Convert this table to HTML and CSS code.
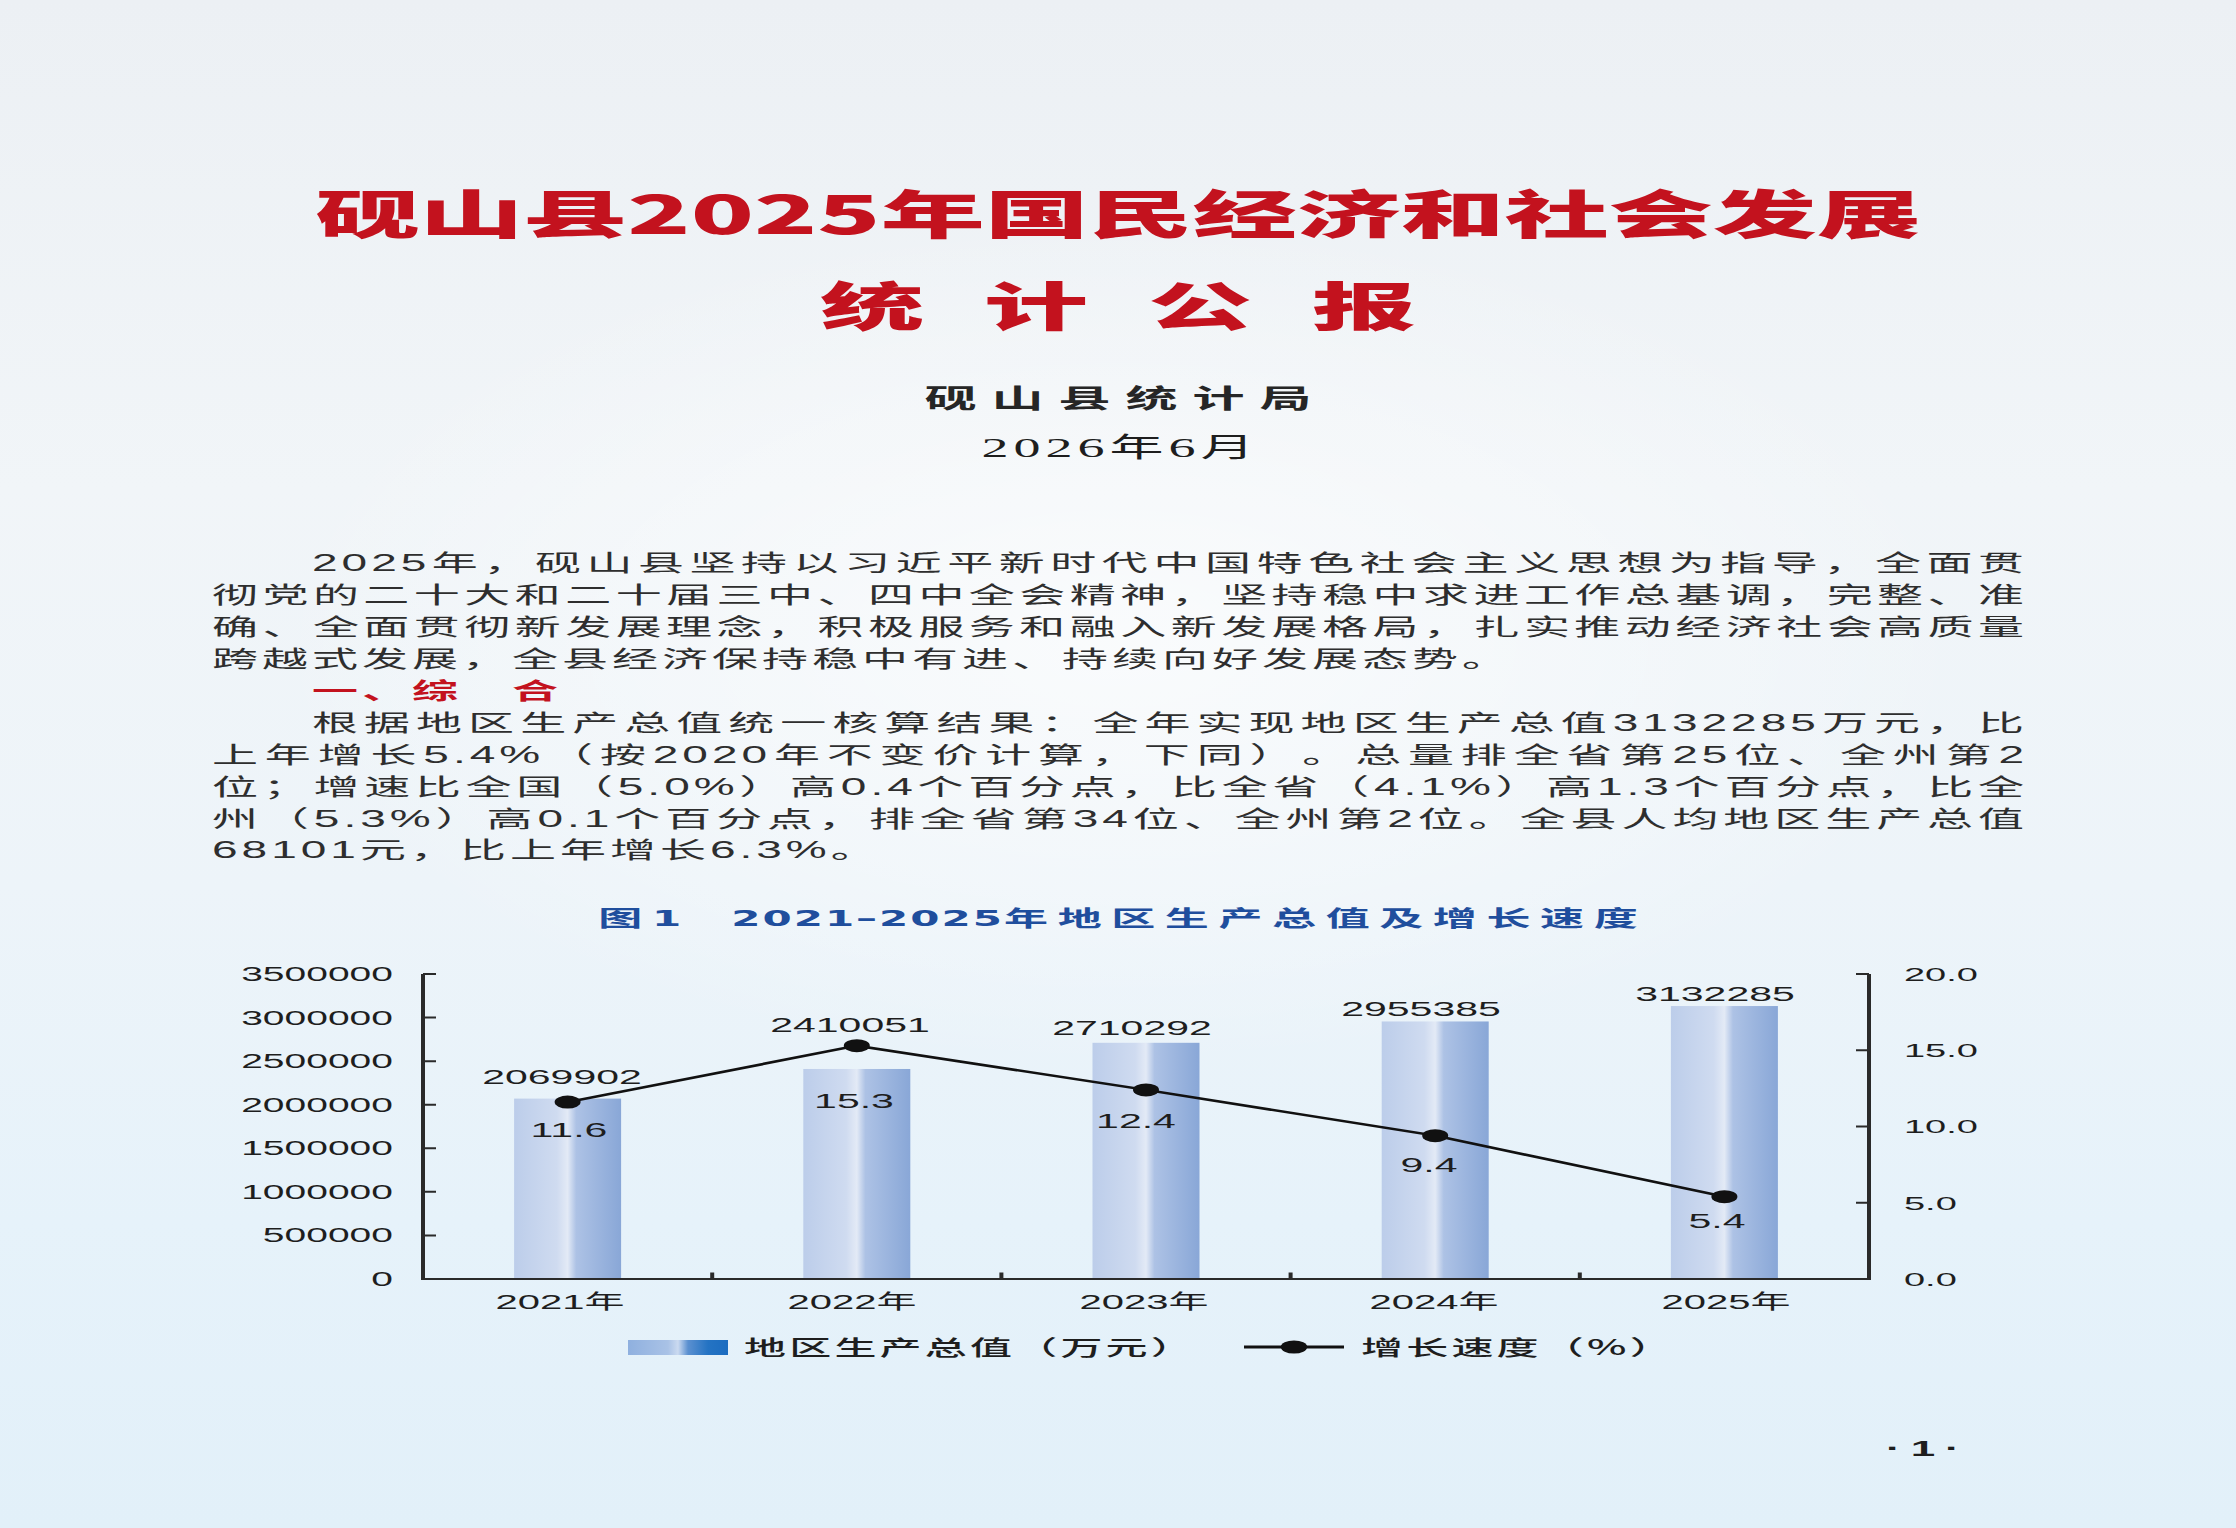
FILE: index.html
```html
<!DOCTYPE html>
<html lang="zh-CN">
<head>
<meta charset="utf-8">
<title>砚山县2025年国民经济和社会发展统计公报</title>
<link rel="stylesheet" href="styles.css">
</head>
<body>
<div class="page">
  <h1 class="title">
    <span class="title-line1">砚山县2025年国民经济和社会发展</span>
    <span class="title-line2">统计公报</span>
  </h1>
  <div class="org">砚山县统计局</div>
  <div class="date">2026年6月</div>

  <div class="text">
    <p class="para">
      <span class="ln ln-first">2025年，砚山县坚持以习近平新时代中国特色社会主义思想为指导，全面贯</span>
      <span class="ln">彻党的二十大和二十届三中、四中全会精神，坚持稳中求进工作总基调，完整、准</span>
      <span class="ln">确、全面贯彻新发展理念，积极服务和融入新发展格局，扎实推动经济社会高质量</span>
      <span class="ln ln-last">跨越式发展，全县经济保持稳中有进、持续向好发展态势。</span>
    </p>
    <h2 class="section">一、综　合</h2>
    <p class="para">
      <span class="ln ln-first">根据地区生产总值统一核算结果：全年实现地区生产总值3132285万元，比</span>
      <span class="ln">上年增长5.4%（按2020年不变价计算，下同）。总量排全省第25位、全州第2</span>
      <span class="ln">位；增速比全国（5.0%）高0.4个百分点，比全省（4.1%）高1.3个百分点，比全</span>
      <span class="ln">州（5.3%）高0.1个百分点，排全省第34位、全州第2位。全县人均地区生产总值</span>
      <span class="ln ln-last">68101元，比上年增长6.3%。</span>
    </p>
  </div>

  <div class="fig-title">图<span class="fig-num">1</span><span class="fig-gap"></span><span class="fig-num">2021–2025</span>年地区生产总值及增长速度</div>

  <svg class="chart" viewBox="0 0 1118 370" width="1118" height="370">
    <defs>
      <linearGradient id="barGrad" x1="0" x2="1" y1="0" y2="0">
        <stop offset="0" stop-color="#bccdea"/>
        <stop offset="0.4" stop-color="#cfdbf0"/>
        <stop offset="0.5" stop-color="#e3eaf6"/>
        <stop offset="0.58" stop-color="#adc2e5"/>
        <stop offset="1" stop-color="#89a7d7"/>
      </linearGradient>
    </defs>
    <g fill="url(#barGrad)">
      <rect x="257.05" y="148.6" width="53.5" height="180.4"/>
      <rect x="401.65" y="118.98" width="53.5" height="210.02"/>
      <rect x="546.25" y="92.8" width="53.5" height="236.2"/>
      <rect x="690.85" y="71.46" width="53.5" height="257.54"/>
      <rect x="835.45" y="56.04" width="53.5" height="272.96"/>
    </g>
    <g class="axis">
      <path d="M211.5 24 V329 H934.5 V24"/>
      <path d="M211.5 24 h6.5 M211.5 67.57 h6.5 M211.5 111.14 h6.5 M211.5 154.71 h6.5 M211.5 198.29 h6.5 M211.5 241.86 h6.5 M211.5 285.43 h6.5"/>
      <path d="M934.5 24 h-6.5 M934.5 100.25 h-6.5 M934.5 176.5 h-6.5 M934.5 252.75 h-6.5"/>
      <path d="M356.1 329 v-6.5 M500.7 329 v-6.5 M645.3 329 v-6.5 M789.9 329 v-6.5"/>
    </g>
    <polyline class="growth-line" points="283.8,152.1 428.4,95.7 573,139.9 717.6,185.65 862.2,246.65"/>
    <g class="dots">
      <circle cx="283.8" cy="152.1" r="6.5"/>
      <circle cx="428.4" cy="95.7" r="6.5"/>
      <circle cx="573" cy="139.9" r="6.5"/>
      <circle cx="717.6" cy="185.65" r="6.5"/>
      <circle cx="862.2" cy="246.65" r="6.5"/>
    </g>
    <g class="lbl-left">
      <text x="196.5" y="31">3500000</text>
      <text x="196.5" y="74.57">3000000</text>
      <text x="196.5" y="118.14">2500000</text>
      <text x="196.5" y="161.71">2000000</text>
      <text x="196.5" y="205.29">1500000</text>
      <text x="196.5" y="248.86">1000000</text>
      <text x="196.5" y="292.43">500000</text>
      <text x="196.5" y="336">0</text>
    </g>
    <g class="lbl-right">
      <text x="952" y="31">20.0</text>
      <text x="952" y="107.25">15.0</text>
      <text x="952" y="183.5">10.0</text>
      <text x="952" y="259.75">5.0</text>
      <text x="952" y="336">0.0</text>
    </g>
    <g class="lbl-value">
      <text x="281" y="134">2069902</text>
      <text x="425" y="82">2410051</text>
      <text x="566" y="85">2710292</text>
      <text x="710.5" y="66">2955385</text>
      <text x="857.5" y="51">3132285</text>
    </g>
    <g class="lbl-value">
      <text x="284.5" y="187">11.6</text>
      <text x="427" y="158">15.3</text>
      <text x="568" y="178">12.4</text>
      <text x="714.5" y="222">9.4</text>
      <text x="858.5" y="278">5.4</text>
    </g>
    <g class="lbl-cat">
      <text x="280" y="359">2021年</text>
      <text x="426" y="359">2022年</text>
      <text x="572" y="359">2023年</text>
      <text x="717" y="359">2024年</text>
      <text x="863" y="359">2025年</text>
    </g>
  </svg>

  <div class="legend">
    <span class="legend-swatch"></span>
    <span class="legend-label">地区生产总值（万元）</span>
    <svg class="legend-line" viewBox="0 0 50 14" width="50" height="14">
      <line x1="0" y1="7" x2="50" y2="7"/>
      <circle cx="25" cy="7" r="6.6"/>
    </svg>
    <span class="legend-label legend-label-2">增长速度（%）</span>
  </div>

  <div class="page-no">·1·</div>
</div>
</body>
</html>
```

FILE: styles.css
```css
html, body {
  margin: 0;
  padding: 0;
  width: 2236px;
  height: 1528px;
  overflow: hidden;
}

body {
  background:
    radial-gradient(ellipse 55% 40% at 50% 42%, rgba(255, 255, 255, 0.65), rgba(255, 255, 255, 0) 70%),
    linear-gradient(180deg, #ecf0f4 0%, #f1f5f8 32%, #edf4f9 58%, #e6f2fa 80%, #e2f0f9 100%);
}

/* The reference page is rendered stretched 2x horizontally: lay out at half width, then stretch. */
.page {
  width: 1118px;
  height: 1528px;
  box-sizing: border-box;
  padding-top: 166px;
  transform: scaleX(2);
  transform-origin: 0 0;
  font-family: "Noto Sans CJK SC", sans-serif;
  color: #222;
  text-autospace: no-autospace;
  text-spacing-trim: space-all;
}

.title {
  margin: 0;
  font-family: "Noto Sans CJK SC", sans-serif;
  font-size: 52px;
  line-height: 92px;
  font-weight: 900;
  color: #c3121e;
  text-align: center;
}

.title-line1 {
  display: block;
  letter-spacing: 0;
}

.title-line2 {
  display: block;
  letter-spacing: 30px;
  padding-left: 30px;
}

.org {
  margin-top: 28.7px;
  font-size: 26px;
  line-height: 36px;
  font-weight: 700;
  letter-spacing: 7.5px;
  padding-left: 7.5px;
  text-align: center;
  color: #262626;
}

.date {
  margin-top: 15.3px;
  font-family: "Liberation Serif", "Noto Sans CJK SC", serif;
  font-size: 27px;
  line-height: 36px;
  letter-spacing: 2.5px;
  padding-left: 2.5px;
  text-align: center;
  color: #1e1e1e;
}

.text {
  margin: 82.3px 0 0 106px;
  width: 908px;
  font-family: "Liberation Sans", "Noto Sans CJK SC", sans-serif;
  font-size: 23px;
  line-height: 31.9px;
  letter-spacing: 2px;
  color: #2e2e2e;
}

.para {
  margin: 0;
}

.ln {
  display: block;
  text-align: justify;
  text-align-last: justify;
}

.ln-first {
  text-indent: 50px;
}

.ln-last {
  text-align: left;
  text-align-last: left;
}

.section {
  margin: 0;
  font-size: 23px;
  line-height: 31.9px;
  font-weight: 700;
  color: #c3121e;
  text-indent: 50px;
}

.fig-title {
  margin-top: 32.2px;
  height: 32px;
  font-size: 22px;
  line-height: 32px;
  font-weight: 700;
  color: #1f4e9d;
  letter-spacing: 4.8px;
  padding-left: 4.8px;
  text-align: center;
}

.fig-num {
  font-family: "DejaVu Sans", "Noto Sans CJK SC", sans-serif;
  font-size: 21px;
  line-height: 0;
  letter-spacing: 1px;
}

.fig-gap {
  display: inline-block;
  width: 24px;
}

.chart {
  display: block;
  margin-top: 18.5px;
  width: 1118px;
  height: 370px;
}

.axis {
  fill: none;
  stroke: #2a2a2a;
  stroke-width: 2;
}

.growth-line {
  fill: none;
  stroke: #111;
  stroke-width: 2.5;
  stroke-linejoin: round;
}

.dots {
  fill: #111;
}

.lbl-left,
.lbl-right,
.lbl-value,
.lbl-cat {
  font-family: "Liberation Sans", "Noto Sans CJK SC", sans-serif;
  fill: #1e1e1e;
}

.lbl-left {
  font-size: 19.5px;
  text-anchor: end;
}

.lbl-right {
  font-size: 19px;
  text-anchor: start;
}

.lbl-value {
  font-size: 20.5px;
  text-anchor: middle;
}

.lbl-cat {
  font-size: 20px;
  text-anchor: middle;
}

.legend {
  margin-top: 11.3px;
  height: 30px;
  display: flex;
  align-items: center;
  padding-left: 314px;
  font-size: 21px;
  line-height: 30px;
  font-weight: 500;
  letter-spacing: 1.6px;
  color: #1e1e1e;
}

.legend-swatch {
  width: 50px;
  height: 15px;
  margin-top: 2px;
  background: linear-gradient(90deg, #8fb0df 0%, #a9c2e6 40%, #cbdaf0 50%, #5b90d0 60%, #2473c3 80%, #1b6cc0 100%);
}

.legend-label {
  margin-left: 8px;
}

.legend-line {
  display: block;
  margin-left: 24px;
  width: 50px;
  height: 14px;
  margin-top: 2px;
}

.legend-line line {
  stroke: #111;
  stroke-width: 3;
}

.legend-line circle {
  fill: #111;
}

.legend-label-2 {
  margin-left: 8.5px;
}

.page-no {
  margin-top: 72.2px;
  padding-left: 943px;
  font-family: "Liberation Sans", sans-serif;
  font-size: 22px;
  line-height: 30px;
  font-weight: 700;
  letter-spacing: 5px;
  color: #1e1e1e;
}
```
